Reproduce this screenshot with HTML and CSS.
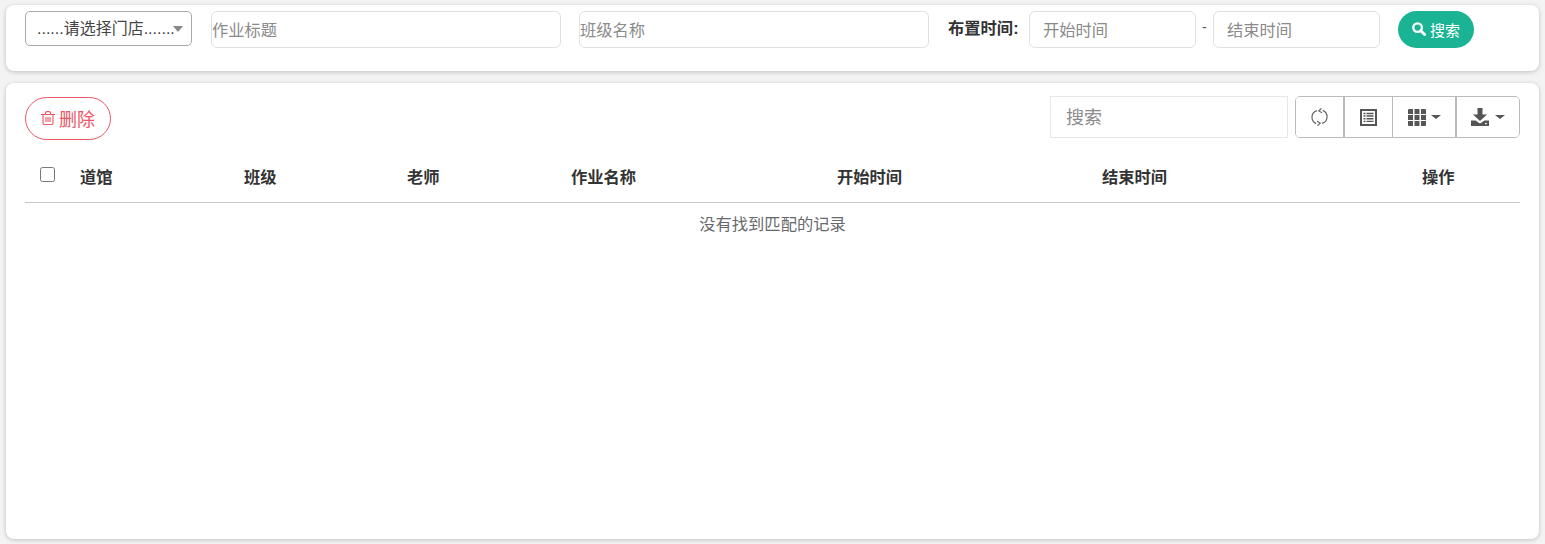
FILE: index.html
```html
<!DOCTYPE html>
<html lang="zh-CN">
<head>
<meta charset="utf-8">
<title>作业列表</title>
<link rel="stylesheet" href="styles.css">
</head>
<body>
<section class="card filter">
  <div class="select-wrap">
    <select class="select"><option>......请选择门店.......</option></select>
    <span class="select-arrow"></span>
  </div>
  <input class="input input-wide" placeholder="作业标题">
  <input class="input input-wide" placeholder="班级名称">
  <div class="range">
    <label class="range-label">布置时间:</label>
    <input class="input input-date" placeholder="开始时间">
    <span class="dash">-</span>
    <input class="input input-date" placeholder="结束时间">
  </div>
  <button class="btn-search">
    <svg class="ico-search" viewBox="0 0 14 14"><circle cx="5.600" cy="5.600" r="4.300" fill="none" stroke="#fff" stroke-width="2.300"/><path d="M8.800 8.800l3.800 3.800" stroke="#fff" stroke-width="2.800" stroke-linecap="round"/></svg>
    <span class="btn-search-text">搜索</span>
  </button>
</section>

<section class="card main">
  <div class="toolbar">
    <button class="btn-delete">
      <svg class="ico-trash" viewBox="0 0 14 14"><path d="M0 3.500h14M2 3.500v8.500a1.500 1.500 0 0 0 1.500 1.500h7a1.500 1.500 0 0 0 1.500-1.500V3.500M4.500 3.500V2A1.500 1.500 0 0 1 6 .6h2A1.500 1.500 0 0 1 9.500 2v1.500M5 6v5M7 6v5M9 6v5" fill="none" stroke="#ed5565" stroke-width="1.100"/></svg>
      <span>删除</span>
    </button>
    <div class="tools">
      <input class="table-search" placeholder="搜索">
      <div class="btn-group">
        <button class="tool tool-a" aria-label="刷新">
          <svg class="ico-refresh" viewBox="0 0 17 18"><path d="M6 2.600A6.900 6.900 0 0 0 5.200 15.600M11 15.400A6.900 6.900 0 0 0 11.800 2.400" fill="none" stroke="#666" stroke-width="1.200"/><path d="M10.500 .3L7.800 2.900l3.200 1.900M6.500 17.700l2.700-2.600-3.200-1.900" fill="none" stroke="#666" stroke-width="1.200"/></svg>
        </button>
        <button class="tool tool-b" aria-label="列表">
          <svg class="ico" viewBox="0 0 17 17"><path fill="#555" fill-rule="evenodd" d="M0 0h17v17H0zM2 2v13h13V2z"/><path d="M3.500 4.500h2M6.500 4.500h7M3.500 7h2M6.500 7h7M3.500 9.700h2M6.500 9.700h7M3.500 12.400h2M6.500 12.400h7" stroke="#555" stroke-width="1.400"/></svg>
        </button>
        <button class="tool tool-c" aria-label="列">
          <svg class="ico-grid" viewBox="0 0 18 17"><path fill="#555" d="M0 1a1 1 0 0 1 1-1h4v5H0zM6.500 0h5v5h-5zM13 0h4a1 1 0 0 1 1 1v4h-5zM0 6h5v5H0zM6.500 6h5v5h-5zM13 6h5v5h-5zM0 12h5v5H1a1 1 0 0 1-1-1zM6.500 12h5v5h-5zM13 12h5v4a1 1 0 0 1-1 1h-4z"/></svg>
          <span class="caret"></span>
        </button>
        <button class="tool tool-d" aria-label="导出">
          <svg class="ico-dl" viewBox="0 0 18 18"><path fill="#555" d="M6.500 0h5v6.500H16l-7 6.500-7-6.500h4.500zM0 12.500h4.500L9 15.500l4.500-3h4.500V18H0z"/><path fill="#fff" d="M14 15h1.800v1.200H14z"/></svg>
          <span class="caret"></span>
        </button>
      </div>
    </div>
  </div>

  <table class="table">
    <colgroup>
      <col class="c0"><col class="c1"><col class="c2"><col class="c3"><col class="c4"><col class="c5"><col class="c6"><col class="c7">
    </colgroup>
    <thead>
      <tr>
        <th class="check-cell"><input class="check" type="checkbox"></th>
        <th>道馆</th><th>班级</th><th>老师</th><th>作业名称</th><th>开始时间</th><th>结束时间</th><th class="op">操作</th>
      </tr>
    </thead>
    <tbody>
      <tr><td class="empty" colspan="8">没有找到匹配的记录</td></tr>
    </tbody>
  </table>
</section>
</body>
</html>
```
FILE: styles.css
```css
* { box-sizing: border-box; }
html, body { height: 100%; }
body {
  margin: 0;
  padding: 5px 6px 5px;
  background: #f3f3f4;
  color: #676a6c;
  font-family: "Liberation Sans", "Noto Sans CJK SC", sans-serif;
  font-size: 16.300px;
  overflow: hidden;
}
.card {
  background: #fff;
  border-radius: 8px;
  box-shadow: 0 1px 4px rgba(0, 0, 0, .22);
}
.filter {
  height: 66px;
  padding: 6px 19px 0;
  display: flex;
  align-items: flex-start;
}
.select-wrap { position: relative; width: 167px; height: 35px; margin-right: 19px; }
.select {
  width: 100%;
  height: 100%;
  appearance: none;
  -webkit-appearance: none;
  background: #fff;
  border: 1px solid #a9a9a9;
  border-radius: 5px;
  padding: 0 0 0 11px;
  color: #444;
  font: inherit;
  font-size: 16px;
}
.select-arrow {
  position: absolute;
  right: 9px;
  top: 15px;
  border: 5px solid transparent;
  border-top: 6px solid #888;
  border-bottom: 0;
}
.input {
  height: 37px;
  border: 1px solid #e0e0e0;
  border-radius: 6px;
  background: #fff;
  font: inherit;
  color: #555;
  outline: none;
  padding-top: 2px;
}
.input::placeholder, .table-search::placeholder { color: #8a8a8a; opacity: 1; }
.input-wide { width: 350px; padding-left: 0; padding-right: 0; margin-right: 18px; }
.range { display: flex; align-items: flex-start; margin-left: 1px; margin-right: 18px; }
.range-label {
  width: 81px;
  padding-top: 6px;
  font-weight: 700;
  color: #333;
  line-height: 22px;
}
.input-date { width: 167px; padding-left: 13px; padding-right: 13px; }
.dash { width: 17px; padding: 8px 0 0 6px; font-size: 14px; color: #555; }
.btn-search {
  width: 76px;
  height: 37px;
  border: 0;
  border-radius: 19px;
  background: #1ab394;
  color: #fff;
  font: inherit;
  display: flex;
  align-items: center;
  justify-content: center;
  gap: 4px;
  padding: 0 0 1px;
}
.btn-search-text { font-size: 15px; }
.ico-search { width: 14px; height: 14px; }
.main {
  margin-top: 12px;
  height: 456px;
  padding: 13px 19px 0;
}
.toolbar { display: flex; justify-content: space-between; align-items: flex-start; }
.btn-delete {
  width: 86px;
  height: 43px;
  margin-top: 1px;
  border: 1px solid #ed5565;
  border-radius: 22px;
  background: #fff;
  color: #ed5565;
  font: inherit;
  font-size: 18px;
  display: flex;
  align-items: center;
  justify-content: center;
  gap: 4px;
  padding: 0 0 2px;
}
.ico-trash { width: 14px; height: 14px; }
.tools { display: flex; gap: 7px; }
.table-search {
  width: 238px;
  height: 42px;
  border: 1px solid #e7e7e7;
  background: #fff;
  padding: 3px 15px 0;
  font: inherit;
  font-size: 18px;
  outline: none;
}
.btn-group {
  display: flex;
  width: 225px;
  height: 42px;
  border: 1px solid #bbb;
  border-radius: 5px;
  overflow: hidden;
}
.tool {
  height: 100%;
  border: 0;
  border-right: 1px solid #bbb;
  background: #fff;
  padding: 0;
  display: flex;
  align-items: center;
  justify-content: center;
  gap: 5px;
}
.tool-a { width: 49px; border-right-width: 2px; }
.tool-b { width: 48px; }
.tool-c { width: 64px; border-right-width: 2px; }
.tool-d { flex: 1; border-right: 0; gap: 6px; }
.ico { width: 17px; height: 17px; display: block; }
.ico-refresh { width: 17px; height: 18px; display: block; }
.ico-grid { width: 18px; height: 17px; display: block; }
.ico-dl { width: 18px; height: 18px; display: block; }
.caret {
  border: 5px solid transparent;
  border-top: 4px solid #555;
  border-bottom: 0;
}
.table {
  width: 100%;
  margin-top: 12px;
  border-collapse: collapse;
  table-layout: fixed;
}
.c0 { width: 55px; }
.c1 { width: 164px; }
.c2 { width: 163px; }
.c3 { width: 164px; }
.c4 { width: 266px; }
.c5 { width: 265px; }
.c6 { width: 280px; }
.table th {
  height: 50px;
  padding: 0 0 2px;
  text-align: left;
  color: #333;
  font-weight: 700;
  border-bottom: 1px solid #c8c8c8;
}
.table th.op { padding-left: 40px; }
.table th.check-cell { padding-left: 15px; vertical-align: middle; }
.check {
  display: block;
  width: 15px;
  height: 15px;
  margin: 0 0 3px;
}
.empty {
  height: 42px;
  text-align: center;
  color: #676a6c;
}
```
